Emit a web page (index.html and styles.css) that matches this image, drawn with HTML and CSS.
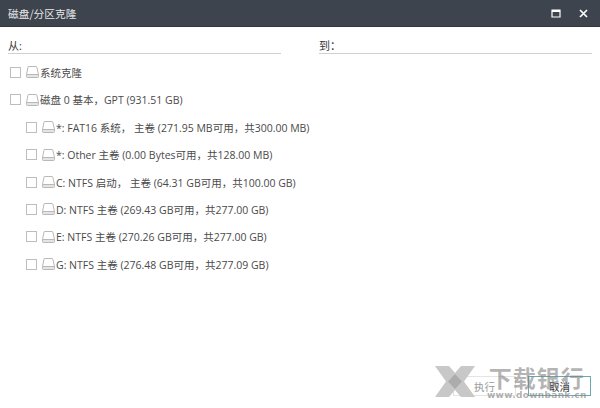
FILE: index.html
```html
<!DOCTYPE html>
<html lang="zh">
<head>
<meta charset="utf-8">
<title>磁盘/分区克隆</title>
<link rel="stylesheet" href="styles.css">
</head>
<body>
<svg class="defs" width="0" height="0">
  <symbol id="disk" viewBox="0 0 14 14">
    <path d="M3.5 1.5h7.5q.6 0 .8.6L13.5 9.5v2.2q0 .8-.8.8H2.3q-.8 0-.8-.8V9.500L3 2.100q.1-.6.5-.6z M1.500 9.500h12" fill="none" stroke="#b8b8b8" stroke-width="1"/>
    <rect x="2" y="10" width="11" height="2" fill="#e4e4e4"/>
  </symbol>
</svg>
<div class="window">
  <header class="titlebar">
    <span class="title">磁盘/分区克隆</span>
    <div class="controls">
      <svg width="10" height="9" viewBox="0 0 10 9"><path d="M1 1h8v7H1z" fill="none" stroke="#fff" stroke-width="1.2"/><path d="M1 2h8" stroke="#fff" stroke-width="2"/></svg>
      <svg width="9" height="9" viewBox="0 0 9 9"><path d="M1 1l7 7M8 1L1 8" stroke="#fff" stroke-width="1.7"/></svg>
    </div>
  </header>
  <main class="content">
    <div class="fields">
      <div class="field from">从:</div>
      <div class="field to">到：</div>
    </div>
    <ul class="tree">
      <li class="row"><span class="check"></span><svg class="disk"><use href="#disk"/></svg><span>系统克隆</span></li>
      <li class="row"><span class="check"></span><svg class="disk"><use href="#disk"/></svg><span>磁盘 0 基本，GPT (931.51 GB)</span></li>
      <li class="row sub"><span class="check"></span><svg class="disk"><use href="#disk"/></svg><span>*: FAT16 系统， 主卷 (271.95 MB可用，共300.00 MB)</span></li>
      <li class="row sub"><span class="check"></span><svg class="disk"><use href="#disk"/></svg><span>*: Other 主卷 (0.00 Bytes可用，共128.00 MB)</span></li>
      <li class="row sub"><span class="check"></span><svg class="disk"><use href="#disk"/></svg><span>C: NTFS 启动， 主卷 (64.31 GB可用，共100.00 GB)</span></li>
      <li class="row sub"><span class="check"></span><svg class="disk"><use href="#disk"/></svg><span>D: NTFS 主卷 (269.43 GB可用，共277.00 GB)</span></li>
      <li class="row sub"><span class="check"></span><svg class="disk"><use href="#disk"/></svg><span>E: NTFS 主卷 (270.26 GB可用，共277.00 GB)</span></li>
      <li class="row sub"><span class="check"></span><svg class="disk"><use href="#disk"/></svg><span>G: NTFS 主卷 (276.48 GB可用，共277.09 GB)</span></li>
    </ul>
  </main>
  <footer class="actions">
    <button class="btn disabled">执行</button>
    <button class="btn primary">取消</button>
  </footer>
  <div class="watermark">
    <svg class="wm-logo" width="40" height="31" viewBox="0 0 40 31"><path d="M0 0h14l6 7 6-7h14L29 15.500 40 31H26l-6-7-6 7H0l11-15.500z" fill="#c8c8c8"/><path d="M20 8l7 7.500-7 7.500-7-7.500z" fill="#acacac"/></svg>
    <div class="wm-text">
      <span class="wm-cn">下载银行</span>
      <span class="wm-en">www.downbank.cn</span>
    </div>
  </div>
</div>
</body>
</html>
```
FILE: styles.css
```css
* { box-sizing: border-box; }
html, body { margin: 0; padding: 0; }
body { width: 600px; height: 408px; overflow: hidden; background: #fff; font-family: "Open Sans", "Noto Sans CJK SC", sans-serif; font-size: 10.5px; color: #4a4a4a; }
.defs { position: absolute; }
.window { position: relative; width: 600px; height: 408px; display: flex; flex-direction: column; }
.titlebar { height: 27px; flex: none; background: #3d444d; border-bottom: 1px solid #30363d; color: #e8e8e8; display: flex; align-items: center; justify-content: space-between; padding: 0 12px 0 8px; }
.title { font-family: "Noto Sans CJK SC", sans-serif; font-size: 10.7px; }
.controls { display: flex; align-items: center; gap: 18px; }
.content { flex: 1; padding: 13px 8px 0; }
.fields { display: flex; gap: 38px; }
.field { height: 14px; line-height: 12px; font-size: 11px; color: #333; border-bottom: 1px solid #d0d0d0; }
.from { width: 273px; }
.to { width: 273px; }
.tree { list-style: none; margin: 4.8px 0 0; padding: 0 0 0 2px; }
.row { height: 27.4px; display: flex; align-items: center; white-space: nowrap; }
.sub { padding-left: 16px; }
.check { width: 11px; height: 11px; border: 1px solid #bdbdbd; background: #fff; flex: none; margin-right: 4px; }
.disk { width: 14px; height: 14px; flex: none; margin-right: 1px; }
.actions { flex: none; display: flex; justify-content: flex-end; gap: 12px; padding: 0 9px 12px 0; }
.btn { width: 63px; height: 20px; padding: 0; background: #fff; font: 10.5px "Noto Sans CJK SC", sans-serif; }
.disabled { border: 1px solid #e4e4e4; color: #999; }
.primary { border: 1px solid #6aa9ad; color: #333; }
.watermark { position: absolute; left: 435px; top: 364px; display: flex; gap: 12px; pointer-events: none; }
.wm-logo { margin-top: 2px; }
.wm-text { display: flex; flex-direction: column; align-items: center; }
.wm-cn { font: 700 23px/26px "Noto Sans CJK SC", sans-serif; color: rgba(130,130,130,.6); letter-spacing: 1px; }
.wm-en { font: 700 9px/10px "DejaVu Sans", sans-serif; color: rgba(140,140,140,.7); letter-spacing: .3px; }
```
